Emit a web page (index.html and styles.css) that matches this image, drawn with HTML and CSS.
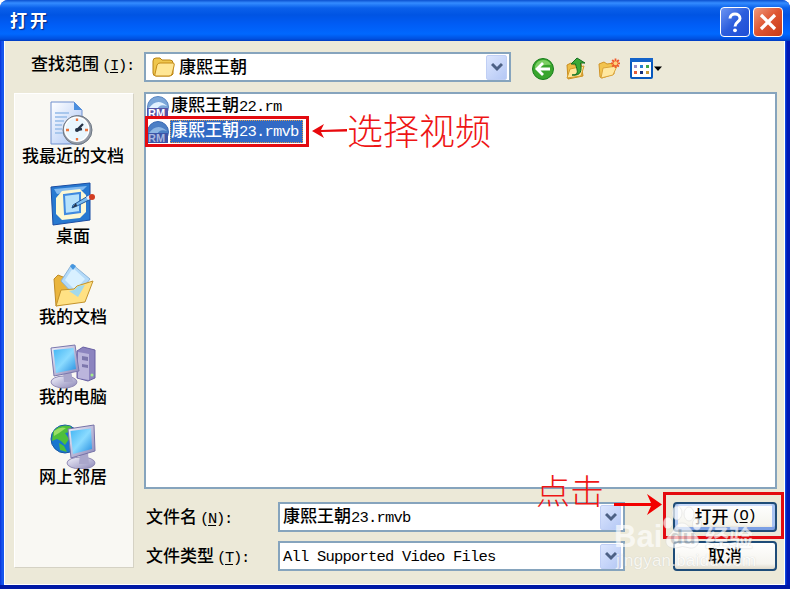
FILE: index.html
```html
<!DOCTYPE html>
<html lang="zh-CN">
<head>
  <title>打开</title>
  <meta charset="UTF-8" />
  <link rel="stylesheet" href="styles.css">
</head>
<body>
  <div class="window">
    <div class="titlebar">
      <span class="title">打开</span>
      <div class="tb-btn help"><svg width="28" height="28" viewBox="0 0 28 28"><path d="M9 10.500C9 4.500 19 4.500 19 10.500C19 14 14 14 14 18.500" fill="none" stroke="#fff" stroke-width="3"/><circle cx="14" cy="22.300" r="1.900" fill="#fff"/></svg></div>
      <div class="tb-btn close"><svg width="28" height="28" viewBox="0 0 28 28"><path d="M7 7L21 21M21 7L7 21" stroke="#fff" stroke-width="3.200"/></svg></div>
    </div>

    <div class="client">
      <div class="toolbar">
        <div class="look-label">查找范围<span class="lat key"> (<u>I</u>):</span></div>
        <div class="combo look">
          <svg width="24" height="22" viewBox="0 0 24 22"><path d="M1 17V5Q1 2 4 2H8L10 4H18Q21 4 21 7V18Q20 20 17 20H4Q1 20 1 17Z" fill="#efc64d" stroke="#b88212"/><path d="M3 18L5 9Q6 7 8 7H21Q23 7 22 10L20 18Q19 20 17 20H4Q2 20 3 18Z" fill="#ffe694" stroke="#c58c18"/></svg>
          <span class="text">康熙王朝</span>
          <span class="drop"><svg width="12" height="10" viewBox="0 0 12 10"><path d="M1 2L6 7L11 2" fill="none" stroke="#4d6185" stroke-width="3"/></svg></span>
        </div>
        <div class="tools">
          <svg width="24" height="24" viewBox="0 0 24 24"><circle cx="12" cy="12" r="10.500" fill="#39a52d" stroke="#187f1c"/><path d="M4 9Q6 3 12 3Q18 3 20 8Q12 7 4 12Z" fill="#7bcf63"/><path d="M12 6L6 12L12 18M6 12H19" fill="none" stroke="#fff" stroke-width="2.800"/></svg>
          <svg width="24" height="24" viewBox="0 0 24 24"><path d="M3 8L7 6L10 8L17 6L19 19L4 22Z" fill="#eebd45" stroke="#c98d20"/><path d="M3 21L6 12L20 9L17 19Z" fill="#ffe79b" stroke="#d59c2c"/><path d="M8 18C16 18 13 13 11.500 7H7L13 1L21 6H16.500C18 14 17 19 8 18Z" fill="#39a936" stroke="#146e21"/></svg>
          <svg width="24" height="24" viewBox="0 0 24 24"><path d="M2 7L7 5L10 7L17 6V17L5 21L3 20Z" fill="#f2c44f" stroke="#d09428"/><path d="M4 21L6 11L20 9L16 18Z" fill="#ffe8a0" stroke="#dba53b"/><path d="M18.500 1.500V11M14 6.300H23M15.200 3L21.800 9.700M21.800 3L15.200 9.700" stroke="#ef5a2c" stroke-width="1.800"/><circle cx="18.500" cy="6.300" r="2" fill="#ffd37b"/></svg>
          <svg width="35" height="24" viewBox="0 0 35 24"><rect x="1" y="2" width="21" height="19" rx="1" fill="#fff" stroke="#0758bd" stroke-width="2"/><path d="M0 1H23V5H0Z" fill="#1463c9"/><path d="M4 8h3v3H4z" fill="#9a90c8"/><path d="M10 8h3v3h-3z" fill="#247fd1"/><path d="M16 8h3v3h-3z" fill="#40a848"/><path d="M4 14h3v3H4z" fill="#e65c39"/><path d="M10 14h3v3h-3z" fill="#14317d"/><path d="M16 14h3v3h-3z" fill="#c79b3c"/><path d="M24 9.500H32L28 14Z" fill="#000"/></svg>
        </div>
      </div>

      <div class="main">
        <div class="places">
          <div class="place">
            <svg width="48" height="48" viewBox="0 0 48 48">
              <defs><linearGradient id="doc" x2="1" y2="1"><stop stop-color="#fff"/><stop offset="1" stop-color="#a9c4f5"/></linearGradient><linearGradient id="scr" x2="1" y2="1"><stop stop-color="#43b5f4"/><stop offset=".5" stop-color="#8bdbff"/><stop offset="1" stop-color="#248de0"/></linearGradient><linearGradient id="gray" x2="1" y2="1"><stop stop-color="#f3f3fc"/><stop offset="1" stop-color="#8b87b8"/></linearGradient></defs>
              <path d="M2 2H25L33 10V44H2Z" fill="url(#doc)" stroke="#6f8fce"/><path d="M25 2V10H33Z" fill="#4b8fdf"/><path d="M6 13H20M6 17H18M6 21H15M6 25H13M6 29H13M6 33H14" stroke="#a8c7ed" stroke-width="2"/>
              <circle cx="28.500" cy="30" r="14.500" fill="#939ba7" stroke="#6e7782"/><circle cx="27.800" cy="29.300" r="12" fill="#eaf7fe" stroke="#fff" stroke-width="1.500"/><path d="M28 30L34 24M28 30L33 29" stroke="#263447" stroke-width="2.300"/><circle cx="28" cy="30" r="2" fill="#263447"/><path d="M28 18.500V21M28 38V40.500M17 30H20M36 30H39" stroke="#ed753d" stroke-width="2.300"/>
            </svg>
            <span>我最近的文档</span>
          </div>
          <div class="place">
            <svg width="48" height="48" viewBox="0 0 48 48"><path d="M2 7L41 3V40L4 45Z" fill="#2879d0" stroke="#1a4da3"/><path d="M5 9L38 6L34 10L8 14Z" fill="#82baf0"/><path d="M13 11L31 9L37 15V32L31 38L13 40L7 34V18Z" fill="#fcf8d4"/><path d="M15 15L31 13V32L16 34Z" fill="#b6e2fc" stroke="#3f8ae0" stroke-width="2"/><path d="M24 25L39 16L42 19L28 26L23 28Z" fill="#7bbdf0" stroke="#235a9d"/><path d="M23 28L27 23L28 26Z" fill="#26364b"/><path d="M37 17L41 15L43 18L39 20Z" fill="#e5edfa"/><circle cx="43" cy="17" r="3" fill="#d23d22"/></svg>
            <span>桌面</span>
          </div>
          <div class="place">
            <svg width="48" height="48" viewBox="0 0 48 48"><path d="M5 18L9 14L14 16L24 15L37 16V36L7 45Z" fill="#eab53d" stroke="#bf8c27"/><path d="M23 3L41 18L27 36L12 20Z" fill="#b3daf9" stroke="#8cb4d8"/><path d="M24 7L36 18L26 29L16 19Z" fill="#d8f0ff"/><path d="M21 5L24 9L27 5L24 3Z" fill="#4596df"/><path d="M7 45L12 29L25 28L28 25L44 20L36 41Z" fill="#ffe184" stroke="#c4932b"/><path d="M20 30L25 29L29 25L36 24L29 36Z" fill="#a3d9ec"/></svg>
            <span>我的文档</span>
          </div>
          <div class="place">
            <svg width="48" height="48" viewBox="0 0 48 48"><path d="M28 10L34 6L46 9V37L39 40L28 37Z" fill="#8c84bf" stroke="#6961a3"/><path d="M29 11L40 13V39L29 37Z" fill="#bbb5dc"/><path d="M33 15L39 16V20L33 19ZM33 23L39 24V27L33 26Z" fill="#7d77ad"/><circle cx="43" cy="34" r="1.500" fill="#a5ed8b"/><ellipse cx="15" cy="41" rx="13" ry="6" fill="url(#gray)" stroke="#918bb5"/><path d="M14 30L22 29L24 41H15Z" fill="#aaa7cb"/><path d="M2 7L26 4L30 30L5 35Z" fill="url(#gray)" stroke="#7b77ad"/><path d="M4.500 9L24.500 7L27 28L7 32Z" fill="url(#scr)"/></svg>
            <span>我的电脑</span>
          </div>
          <div class="place">
            <svg width="48" height="48" viewBox="0 0 48 48"><circle cx="16" cy="18" r="14" fill="#1876cf" stroke="#1958a3"/><path d="M4 11Q10 3 21 5L25 10L16 12L20 18L16 24L12 20L8 18L3 20ZM10 22L15 25L18 31L11 29Z" fill="#4ebf3a"/><path d="M5 10Q11 5 17 7L10 12L5 15Z" fill="#9adf65"/><ellipse cx="32" cy="42" rx="14" ry="6" fill="url(#gray)" stroke="#918bb5"/><path d="M31 32H39L40 43H30Z" fill="#aaa7cb"/><path d="M19 8L45 4L46 30L22 37Z" fill="url(#gray)" stroke="#7773a8"/><path d="M21.500 10L42 7.500L43 28L24 33Z" fill="url(#scr)"/></svg>
            <span>网上邻居</span>
          </div>
        </div>

        <div class="right">
          <div class="list">
            <div class="file">
              <svg width="24" height="22" viewBox="0 0 24 22"><circle cx="12" cy="11" r="10.500" fill="#7ba6d8" stroke="#5885c0"/><path d="M3 12Q11 1 21 10Q13 7 10 15Z" fill="#e2f2ff"/><path d="M1 12H22V22H1Z" fill="#5554a5"/><text x="2" y="21" class="rm">RM</text></svg>
              <span class="name">康熙王朝<span class="lat">22.rm</span></span>
            </div>
            <div class="file selected">
              <svg width="24" height="22" viewBox="0 0 24 22"><circle cx="12" cy="11" r="10.500" fill="#4c7fc5" stroke="#3969b3"/><path d="M3 12Q11 1 21 10Q13 7 10 15Z" fill="#8eb6e3"/><path d="M1 12H22V22H1Z" fill="#3d55a7"/><text x="2" y="21" class="rm">RM</text></svg>
              <span class="name">康熙王朝<span class="lat">23.rmvb</span></span>
            </div>
          </div>

          <div class="form">
            <div class="label">文件名<span class="lat key"> (<u>N</u>):</span></div>
            <div class="combo">
              <span class="text">康熙王朝<span class="lat">23.rmvb</span></span>
              <span class="drop"><svg width="12" height="10" viewBox="0 0 12 10"><path d="M1 2L6 7L11 2" fill="none" stroke="#4d6185" stroke-width="3"/></svg></span>
            </div>
            <div class="button default">打开<span class="lat key"> (<u>O</u>)</span></div>
            <div class="label">文件类型<span class="lat key"> (<u>T</u>):</span></div>
            <div class="combo">
              <span class="text"><span class="lat">All Supported Video Files</span></span>
              <span class="drop"><svg width="12" height="10" viewBox="0 0 12 10"><path d="M1 2L6 7L11 2" fill="none" stroke="#4d6185" stroke-width="3"/></svg></span>
            </div>
            <div class="button">取消</div>
          </div>
        </div>
      </div>
    </div>

    <!-- step notes -->
    <div class="red-box box-file"></div>
    <svg class="arrow arrow-file" width="36" height="18" viewBox="0 0 36 18"><path d="M0 9L12 2L9 8L35 7V9.500L9 10L12 16Z" fill="#e8090d"/></svg>
    <div class="note note-file">选择视频</div>
    <div class="note note-open">点击</div>
    <svg class="arrow arrow-open" width="50" height="22" viewBox="0 0 50 22"><path d="M0 9H37L33 0L48 10.500L33 21L37 12H0Z" fill="#f20000"/></svg>
    <div class="red-box box-open"></div>

    <!-- watermark -->
    <div class="mark mark-bai">Bai</div>
    <svg class="paw" width="44" height="46" viewBox="0 0 44 46"><g fill="#fff" stroke="#d5d5d5" stroke-width=".6"><ellipse cx="6" cy="18" rx="4.500" ry="6"/><ellipse cx="15" cy="8" rx="5" ry="7"/><ellipse cx="27" cy="9" rx="5" ry="7"/><ellipse cx="35" cy="19" rx="4.500" ry="6"/><path d="M20 18C27 18 28 25 34 30C40 36 35 44 28 43Q20 40 14 43C4 44 1 36 7 30C13 25 13 18 20 18Z"/></g><text x="8" y="39" class="paw-text">du</text></svg>
    <div class="mark mark-jy">经验</div>
    <div class="mark mark-url">jingyan.baidu.com</div>
  </div>
</body>
</html>
```
FILE: styles.css
```css
* { box-sizing: border-box; }
body { margin: 0; background: #fff; font: 500 17px/20px "Noto Sans CJK SC", sans-serif; color: #000; overflow: hidden; }
svg { display: block; flex: none; }
.window { position: relative; width: 790px; height: 589px; display: flex; flex-direction: column; background: linear-gradient(90deg, #0831d9, #1556ed 2px, #1556ed 785px, #0019b5 787px); border-bottom: 4px solid #0019a5; border-radius: 8px 8px 0 0; overflow: hidden; }
.titlebar { height: 41px; flex: none; display: flex; align-items: center; gap: 3px; padding: 3px 7px 0 10px; background: linear-gradient(#0b50cf, #348cff 3px, #0a60ea 8px, #0054e3 15px, #005cf5 24px, #0068ff 34px, #0050df 39px, #003ac0); }
.title { flex: 1; margin-top: -4px; color: #fff; font-weight: bold; font-size: 17px; letter-spacing: 3px; text-shadow: 1px 1px 1px #0a2a80; }
.tb-btn { width: 30px; height: 30px; border: 1px solid #fff; border-radius: 4px; }
.help { background: linear-gradient(135deg, #6f96f2, #2b5ddd 50%, #1d4ed6); }
.close { background: linear-gradient(135deg, #ef9a7c, #de5430 50%, #c63b18); }
.client { flex: 1; margin: 0 5px 0 4px; padding: 11px 7px 0 9px; background: #ece9d8; border: 1px solid #fff; border-top: 0; }
.lat { font-family: "Liberation Mono", monospace; font-size: 15.500px; letter-spacing: -.8px; white-space: pre; }
.key { margin-left: -5px; letter-spacing: -1.300px; }
u { text-underline-offset: 2px; }

.toolbar { display: flex; height: 30px; }
.look-label { width: 130px; padding: 1px 0 0 17px; white-space: nowrap; }
.combo { display: flex; align-items: center; height: 30px; padding: 2px; background: #fff; border: 2px solid #86a4bd; }
.look { width: 367px; padding-left: 6px; }
.text { flex: 1; margin-top: -2px; padding-left: 1px; white-space: nowrap; }
.look .text { padding-left: 3px; }
.drop { width: 21px; height: 25px; display: flex; align-items: center; justify-content: center; background: linear-gradient(135deg, #dce6fe, #b5c8f5); border: 1px solid #c0cff5; border-radius: 2px; }
.tools { display: flex; align-items: center; gap: 9px; padding: 3px 0 0 20px; }

.main { display: flex; gap: 10px; margin-top: 10px; }
.places { width: 120px; height: 475px; margin-top: 1px; padding: 6px 2px 0 0; background: #f9f8f3; border: 1px solid #fff; border-right-color: #d5d2c4; border-bottom-color: #d5d2c4; }
.place { height: 80.300px; display: flex; flex-direction: column; align-items: center; white-space: nowrap; }
.place span { margin-top: -2px; line-height: 18px; }
.right { width: 633px; }
.list { height: 397px; background: #fff; border: 2px solid #86a4bd; }
.file { display: flex; align-items: center; height: 25px; }
.name { height: 23px; line-height: 18px; padding: 0 1px; }
.selected .name { color: #fff; background: #316ac5; outline: 1px dotted #d99a50; outline-offset: -1px; padding-right: 4px; }
.rm { font: bold 11px "Liberation Sans", sans-serif; fill: #fff; }
.selected .rm { fill: #a7b7df; }

.form { display: grid; grid-template-columns: 134px 347px 152px; grid-template-rows: 30px 30px; gap: 9px 0; margin-top: 13px; }
.label { padding: 4px 0 0 2px; white-space: nowrap; }
.button { width: 104px; justify-self: end; display: flex; align-items: center; justify-content: center; padding-bottom: 2px; border: 2px solid #1e4c78; border-radius: 4px; background: linear-gradient(#fff, #f5f4ee 80%, #ded9cb); white-space: pre; }
.default { box-shadow: inset 0 -3px 0 #7b9fe4, inset 3px 0 0 #a9c4f3, inset -3px 0 0 #a9c4f3, inset 0 2px 0 #cbdcfb; }

.mark { position: absolute; color: #fff; opacity: .65; white-space: nowrap; }
.mark-bai { left: 614px; top: 520px; font: bold 31px/34px "Liberation Sans", sans-serif; }
.paw { position: absolute; left: 662px; top: 505px; opacity: .7; }
.paw-text { font: bold 21px "Liberation Sans", sans-serif; fill: #c4c8cc; }
.mark-jy { left: 705px; top: 523px; font-weight: bold; font-size: 24px; line-height: 28px; text-shadow: 0 0 1px #aaa; }
.mark-url { left: 616px; top: 551px; font: 17px/20px "Liberation Sans", sans-serif; letter-spacing: .2px; text-shadow: 0 0 1px #bbb; }

.red-box { position: absolute; border: 3px solid #e30b10; }
.box-file { left: 145px; top: 116px; width: 164px; height: 31px; }
.box-open { left: 663px; top: 492px; width: 121px; height: 47px; }
.note { position: absolute; color: #ee1515; font-weight: 300; white-space: nowrap; }
.note-file { left: 347px; top: 109px; font-size: 36px; line-height: 40px; }
.note-open { left: 536px; top: 470px; font-size: 34px; line-height: 40px; }
.arrow { position: absolute; }
.arrow-file { left: 312px; top: 122px; }
.arrow-open { left: 614px; top: 494px; }
```
